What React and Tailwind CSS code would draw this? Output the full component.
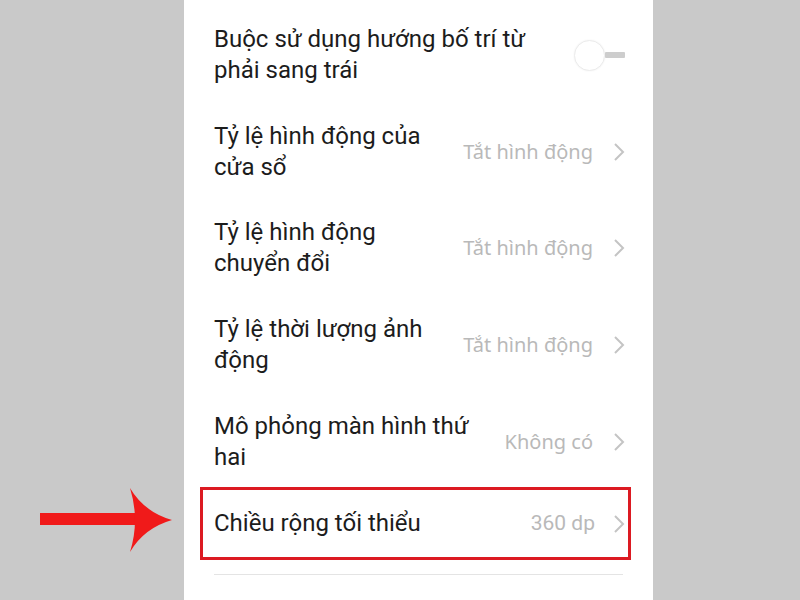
const rows = [
  { title: ["Buộc sử dụng hướng bố trí từ", "phải sang trái"], toggle: true },
  { title: ["Tỷ lệ hình động của", "cửa sổ"], value: "Tắt hình động" },
  { title: ["Tỷ lệ hình động", "chuyển đổi"], value: "Tắt hình động" },
  { title: ["Tỷ lệ thời lượng ảnh", "động"], value: "Tắt hình động" },
  { title: ["Mô phỏng màn hình thứ", "hai"], value: "Không có" },
];

function Chevron() {
  return (
    <svg width="12" height="20" viewBox="0 0 12 20" className="shrink-0">
      <path d="M2 2 L10 10 L2 18" fill="none" stroke="#c4c4c4" strokeWidth="2" />
    </svg>
  );
}

function Toggle() {
  return (
    <div className="flex items-center">
      <div className="w-[31px] h-[31px] rounded-full border border-[#ececec] bg-white shadow-[0_0_2px_rgba(0,0,0,0.06)]" />
      <div className="w-[20px] h-[6px] bg-[#cdcdcd] rounded-[1px]" />
    </div>
  );
}

export default function App() {
  return (
    <div className="relative w-[800px] h-[600px] bg-[#c9c9c9] overflow-hidden font-['Roboto',sans-serif]">
      {/* phone screen */}
      <div className="ml-[184px] w-[469px] h-full bg-white pt-[7px]">
        {rows.map((r, i) => (
          <div key={i} className="flex items-center pl-[30px] pr-[28px] py-[17.3px]">
            <div className="flex-1 text-[24px] leading-[31px] text-[#1c1c1c]">
              {r.title.map((t, j) => (
                <div key={j}>{t}</div>
              ))}
            </div>
            {r.toggle ? (
              <Toggle />
            ) : (
              <div className="flex items-center gap-[20px]">
                <span className="text-[20px] text-[#b9b9b9] font-['Noto_Sans',sans-serif]">{r.value}</span>
                <Chevron />
              </div>
            )}
          </div>
        ))}

        {/* highlighted row */}
        <div className="relative flex items-center pl-[30px] pr-[28px] pt-[18px] pb-[17px]">
          <div className="flex-1 text-[24px] leading-[31px] text-[#1c1c1c]">Chiều rộng tối thiểu</div>
          <div className="flex items-center gap-[18px]">
            <span className="text-[21px] text-[#b9b9b9]">360 dp</span>
            <Chevron />
          </div>
          <div className="absolute left-[16px] right-[22px] -top-[3px] -bottom-[4px] border-[3px] border-[#dc1a22]" />
        </div>

        <div className="mx-[30px] mt-[18px] h-px bg-[#e4e4e4]" />
      </div>

      {/* annotation arrow */}
      <svg className="absolute left-[40px] top-[486px]" width="134" height="68" viewBox="0 0 134 68">
        <rect x="0" y="27" width="100" height="12" fill="#f01a1a" />
        <path d="M90 2 Q104 26 132 34 Q104 42 90 66 Q100 34 90 2 Z" fill="#f01a1a" />
      </svg>
    </div>
  );
}
